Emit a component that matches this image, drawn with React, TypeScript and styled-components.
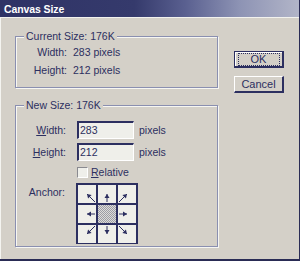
import React from 'react';
import styled, { createGlobalStyle } from 'styled-components';

const GlobalStyle = createGlobalStyle`
    html, body { margin: 0; padding: 0; background: #d4d0c8; }
    body { font-family: "Liberation Sans", Arial, sans-serif; }
`;

const ink = '#2c2f60';
const face = '#d4d0c8';
const field = '#efefea';

const Window = styled.div`
    width: 299px;
    height: 259px;
    background: ${face};
    border-right: 1px solid #2a2c55;
    border-bottom: 2px solid #2a2c55;
    box-shadow: inset 1px 0 0 #f4f4f0;
    display: flex;
    flex-direction: column;
    color: ${ink};
    font-size: 10.5px;
    overflow: hidden;
`;

const TitleBar = styled.div`
    height: 17px;
    flex: none;
    display: flex;
    align-items: center;
    padding-left: 4px;
    background: linear-gradient(to right, #2f3366 0%, #353a6c 45%, #5a6090 62%, #8d93b4 80%, #b2b5c8 100%);
    border-bottom: 1px solid #f2f2ee;
    color: #ffffff;
    font-weight: bold;
    font-size: 10.5px;
    letter-spacing: -0.1px;
`;

const Body = styled.div`
    flex: 1;
    display: flex;
    padding: 18px 0 0 15px;
`;

const LeftCol = styled.div`
    width: 203px;
    display: flex;
    flex-direction: column;
    gap: 17px;
`;

const RightCol = styled.div`
    margin-left: 16px;
    padding-top: 15px;
    display: flex;
    flex-direction: column;
    gap: 8px;
`;

const Group = styled.div<{ $h: number }>`
    position: relative;
    height: ${p => p.$h}px;
    box-sizing: border-box;
    border: 1px solid #8a8fb0;
    box-shadow: inset 1px 1px 0 #f6f6f2, 1px 1px 0 #f6f6f2;
`;

const Caption = styled.span`
    position: absolute;
    left: 8px;
    top: -7px;
    padding: 0 2px;
    background: ${face};
    line-height: 13px;
    white-space: nowrap;
`;

const InfoGrid = styled.div`
    display: grid;
    grid-template-columns: 51px auto;
    column-gap: 6px;
    row-gap: 5px;
    padding-top: 9px;
    line-height: 13px;
`;

const Label = styled.span`
    text-align: right;
    white-space: nowrap;
`;

const FormGrid = styled.div`
    display: grid;
    grid-template-columns: 50px 57px auto;
    column-gap: 11px;
    row-gap: 4px;
    padding-top: 15px;
    align-items: center;
`;

const Units = styled.span`
    margin-left: -6px;
`;

const Input = styled.div`
    height: 18px;
    box-sizing: border-box;
    background: ${field};
    border-top: 2px solid ${ink};
    border-left: 2px solid ${ink};
    border-right: 1px solid #ffffff;
    border-bottom: 1px solid #ffffff;
    padding-left: 1px;
    line-height: 15px;
`;

const CheckRow = styled.div`
    grid-column: 2 / 4;
    display: flex;
    align-items: center;
    gap: 3px;
    height: 14px;
`;

const Check = styled.div`
    width: 11px;
    height: 11px;
    box-sizing: border-box;
    background: ${field};
    border-top: 1px solid #8a8a90;
    border-left: 1px solid #8a8a90;
    border-right: 1px solid #ffffff;
    border-bottom: 1px solid #ffffff;
`;

const Underline = styled.span`
    text-decoration: underline;
`;

const AnchorLabel = styled(Label)`
    align-self: start;
    padding-top: 3px;
    margin-right: 1px;
`;

const AnchorGrid = styled.div`
    grid-column: 2 / 4;
    width: 62px;
    height: 61px;
    box-sizing: border-box;
    margin-left: -1px;
    display: grid;
    grid-template-columns: repeat(3, 1fr);
    grid-template-rows: repeat(3, 1fr);
    gap: 2px;
    background: ${ink};
    border: 1px dotted ${ink};
    padding: 1px;
`;

const Cell = styled.div<{ $center?: boolean }>`
    background: ${p => (p.$center
        ? 'repeating-conic-gradient(#9c9ca6 0 25%, #dcdcd8 0 50%) 0 0 / 2px 2px'
        : field)};
    display: flex;
    align-items: center;
    justify-content: center;
`;

const Button = styled.div<{ $default?: boolean }>`
    width: 50px;
    height: 17px;
    box-sizing: border-box;
    display: flex;
    align-items: center;
    justify-content: center;
    font-size: 11px;
    background: ${face};
    border: 1px solid ${p => (p.$default ? ink : '#ffffff')};
    border-right: 2px solid ${ink};
    border-bottom: 2px solid ${ink};
    box-shadow: ${p => (p.$default ? 'inset 1px 1px 0 #ffffff' : 'none')};
`;

const Focus = styled.span`
    display: flex;
    align-items: center;
    justify-content: center;
    width: 40px;
    height: 11px;
    border: 1px dotted ${ink};
`;

const dirs: [number, number][] = [
    [-1, -1], [0, -1], [1, -1],
    [-1, 0], [0, 0], [1, 0],
    [-1, 1], [0, 1], [1, 1],
];

const Arrow: React.FC<{ dx: number; dy: number }> = ({ dx, dy }) => {
    const diag = dx !== 0 && dy !== 0;
    const L = diag ? 8 : 8;
    const tx = 9 - dx * 8;
    const ty = 9 - dy * 8;
    const hx = tx + dx * L;
    const hy = ty + dy * L;
    const ang = (Math.atan2(dy, dx) * 180) / Math.PI;
    return (
        <svg width="18" height="18" viewBox="0 0 18 18">
            <line x1={tx} y1={ty} x2={hx} y2={hy} stroke={ink} strokeWidth="1" />
            <polygon
                points="0,0 -4,-2.5 -4,2.5"
                fill={ink}
                transform={`translate(${hx} ${hy}) rotate(${ang})`}
            />
        </svg>
    );
};

export default function App() {
    return (
        <>
            <GlobalStyle />
            <Window>
                <TitleBar>Canvas Size</TitleBar>
                <Body>
                    <LeftCol>
                        <Group $h={52}>
                            <Caption>Current Size: 176K</Caption>
                            <InfoGrid>
                                <Label>Width:</Label>
                                <span>283 pixels</span>
                                <Label>Height:</Label>
                                <span>212 pixels</span>
                            </InfoGrid>
                        </Group>
                        <Group $h={142}>
                            <Caption>New Size: 176K</Caption>
                            <FormGrid>
                                <Label><Underline>W</Underline>idth:</Label>
                                <Input>283</Input>
                                <Units>pixels</Units>
                                <Label><Underline>H</Underline>eight:</Label>
                                <Input>212</Input>
                                <Units>pixels</Units>
                                <span />
                                <CheckRow>
                                    <Check />
                                    <span><Underline>R</Underline>elative</span>
                                </CheckRow>
                                <AnchorLabel>Anchor:</AnchorLabel>
                                <AnchorGrid>
                                    {dirs.map(([dx, dy], i) => (
                                        <Cell key={i} $center={dx === 0 && dy === 0}>
                                            {!(dx === 0 && dy === 0) && <Arrow dx={dx} dy={dy} />}
                                        </Cell>
                                    ))}
                                </AnchorGrid>
                            </FormGrid>
                        </Group>
                    </LeftCol>
                    <RightCol>
                        <Button $default><Focus>OK</Focus></Button>
                        <Button>Cancel</Button>
                    </RightCol>
                </Body>
            </Window>
        </>
    );
}
